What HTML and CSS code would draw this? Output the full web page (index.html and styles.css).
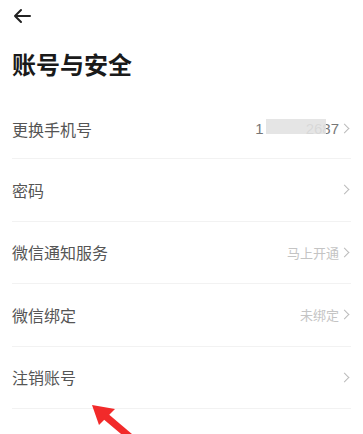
FILE: index.html
```html
<!DOCTYPE html>
<html lang="zh-CN">
  <head>
    <meta charset="UTF-8" />
    <meta name="viewport" content="width=device-width, initial-scale=1.0" />
    <title>账号与安全</title>
    <link rel="stylesheet" href="styles.css">
  </head>
  <body>
    <div class="page">
      <div class="topbar">
        <svg class="back" width="20" height="16" viewBox="0 0 20 16">
          <path d="M18 8H3M9 2L3 8l6 6" fill="none" stroke="#222" stroke-width="2" stroke-linecap="round" stroke-linejoin="round" />
        </svg>
      </div>
      <h1>账号与安全</h1>

      <ul class="list">
        <li class="row">
          <span class="name">更换手机号</span>
          <span class="value phone">1<span class="blur"></span>2687<i class="chev"></i></span>
        </li>
        <li class="row">
          <span class="name">密码</span>
          <span class="value"><i class="chev"></i></span>
        </li>
        <li class="row">
          <span class="name">微信通知服务</span>
          <span class="value">马上开通<i class="chev"></i></span>
        </li>
        <li class="row">
          <span class="name">微信绑定</span>
          <span class="value">未绑定<i class="chev"></i></span>
        </li>
        <li class="row">
          <span class="name">注销账号</span>
          <span class="value"><i class="chev"></i></span>
        </li>
      </ul>

      <svg class="pointer" width="60" height="40" viewBox="0 0 60 40">
        <path d="M46 40L14 13" stroke="#f22a2a" stroke-width="7" />
        <polygon points="2,3 25,7 9,23" fill="#f22a2a" />
      </svg>
    </div>
  </body>
</html>
```

FILE: styles.css
```css
body {
  margin: 0;
  background: #fff;
  font-family: "Noto Sans CJK SC", "Noto Sans", sans-serif;
  color: #333;
  overflow: hidden;
}

.page {
  position: relative;
  height: 434px;
  padding: 0 12px;
}

.topbar {
  height: 32px;
  display: flex;
  align-items: center;
}

h1 {
  margin: 0;
  padding: 12px 0 0;
  height: 50px;
  font-size: 24px;
  font-weight: bold;
  color: #1a1a1a;
  line-height: 40px;
}

.list {
  list-style: none;
  margin: 5px 0 0;
  padding: 0;
}

.row {
  height: 61.5px;
  display: flex;
  align-items: center;
  justify-content: space-between;
  border-bottom: 1px solid #f2f2f2;
}

.row:first-child {
  height: 59px;
}

.name {
  font-size: 16px;
  color: #555;
}

.value {
  display: flex;
  align-items: center;
  font-size: 13px;
  color: #c4c4c4;
}

.phone {
  font-size: 15px;
  color: #777;
  font-family: "Liberation Sans", sans-serif;
}

.blur {
  display: inline-block;
  width: 60px;
  height: 15px;
  margin: 0 -20px 0 2px;
  background: #e2e2e2;
  opacity: 0.9;
  position: relative;
  top: -2px;
}

.chev {
  display: inline-block;
  width: 6px;
  height: 6px;
  border-top: 1.5px solid #bbb;
  border-right: 1.5px solid #bbb;
  transform: rotate(45deg);
  margin: 0 3px 0 2px;
}

.pointer {
  position: absolute;
  left: 90px;
  top: 402px;
}
```
